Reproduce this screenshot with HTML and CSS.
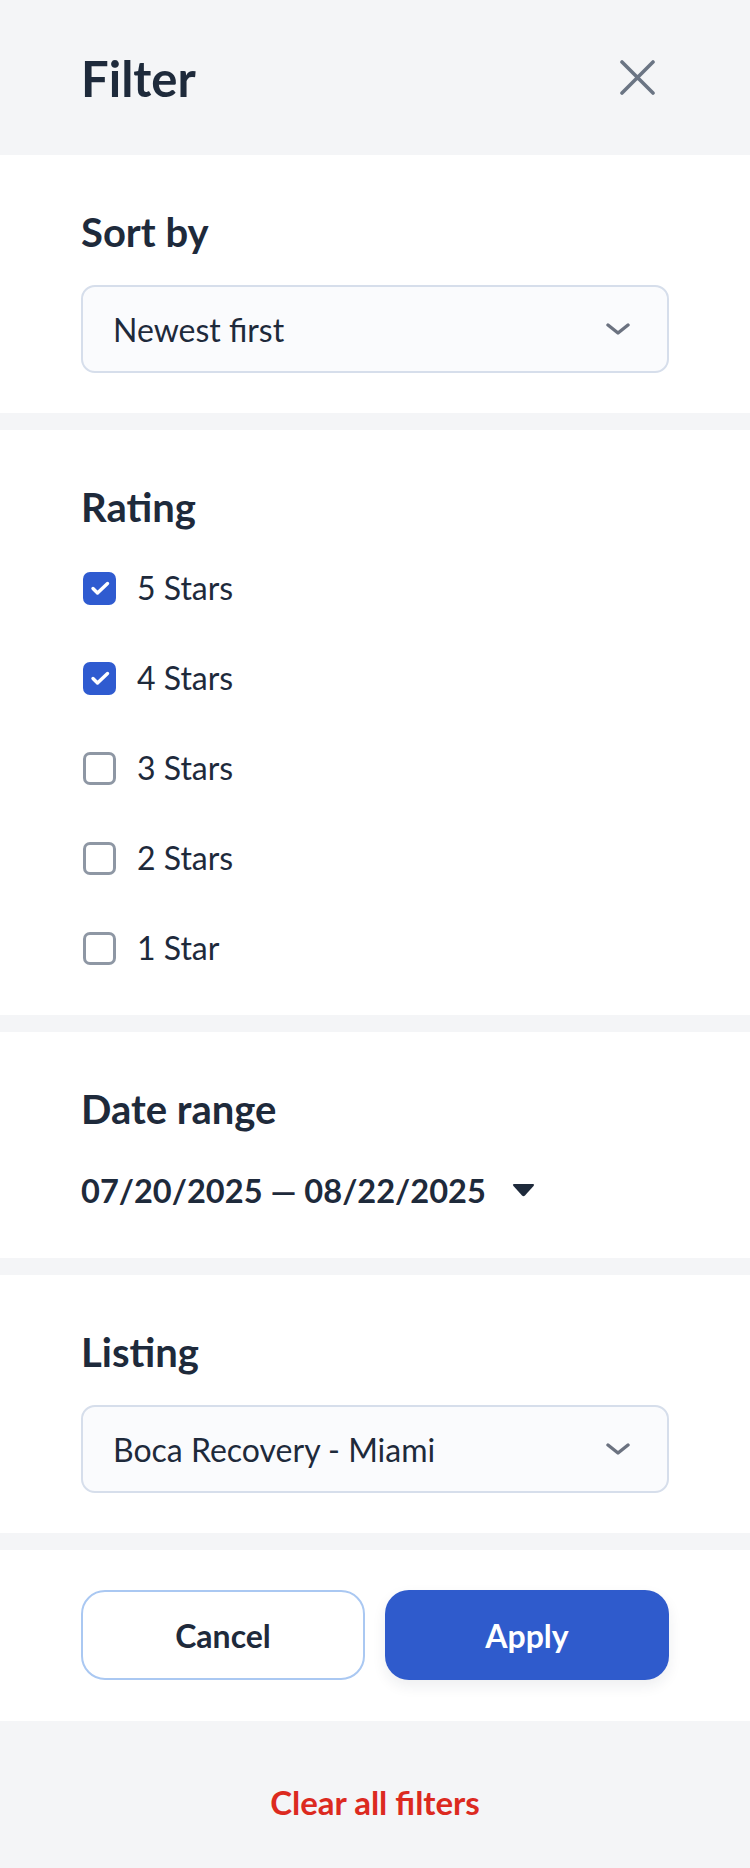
FILE: index.html
```html
<!DOCTYPE html>
<html lang="en">
<head>
<meta charset="utf-8">
<title>Filter</title>
<link rel="stylesheet" href="styles.css">
</head>
<body>
<div class="page">
  <header class="header">
    <h1 class="title">Filter</h1>
    <button class="close" aria-label="Close">
      <svg width="35" height="35" viewBox="0 0 35 35"><path d="M2 2 L33 33 M33 2 L2 33" stroke="#6b7584" stroke-width="3.6" stroke-linecap="round" fill="none"/></svg>
    </button>
  </header>

  <section class="section">
    <h2 class="heading">Sort by</h2>
    <div class="select">
      <span>Newest first</span>
      <svg class="chev" width="24" height="12" viewBox="0 0 24 12"><path d="M2 2 L12 10 L22 2" stroke="#6b7280" stroke-width="3.4" stroke-linecap="round" stroke-linejoin="round" fill="none"/></svg>
    </div>
  </section>

  <section class="section section-rating">
    <h2 class="heading">Rating</h2>
    <ul class="checks">
      <li class="check-row"><span class="box checked"><svg width="32" height="32" viewBox="0 0 32 32"><path d="M9 16.5 L13.5 21 L23.5 11.5" stroke="#fff" stroke-width="3.4" stroke-linecap="round" stroke-linejoin="round" fill="none"/></svg></span><span class="label">5 Stars</span></li>
      <li class="check-row"><span class="box checked"><svg width="32" height="32" viewBox="0 0 32 32"><path d="M9 16.5 L13.5 21 L23.5 11.5" stroke="#fff" stroke-width="3.4" stroke-linecap="round" stroke-linejoin="round" fill="none"/></svg></span><span class="label">4 Stars</span></li>
      <li class="check-row"><span class="box"></span><span class="label">3 Stars</span></li>
      <li class="check-row"><span class="box"></span><span class="label">2 Stars</span></li>
      <li class="check-row"><span class="box"></span><span class="label">1 Star</span></li>
    </ul>
  </section>

  <section class="section section-date">
    <h2 class="heading">Date range</h2>
    <div class="date">
      <span>07/20/2025 — 08/22/2025</span>
      <svg width="23" height="14" viewBox="0 0 22 13"><path d="M2.2 0.8 H19.8 Q22 0.8 20.6 2.6 L12.4 11.8 Q11 13.2 9.6 11.8 L1.4 2.6 Q0 0.8 2.2 0.8 Z" fill="#1e2a3b"/></svg>
    </div>
  </section>

  <section class="section section-listing">
    <h2 class="heading">Listing</h2>
    <div class="select">
      <span>Boca Recovery - Miami</span>
      <svg class="chev" width="24" height="12" viewBox="0 0 24 12"><path d="M2 2 L12 10 L22 2" stroke="#6b7280" stroke-width="3.4" stroke-linecap="round" stroke-linejoin="round" fill="none"/></svg>
    </div>
  </section>

  <section class="section actions">
    <button class="btn btn-cancel">Cancel</button>
    <button class="btn btn-apply">Apply</button>
  </section>

  <footer class="footer">
    <a class="clear" href="#">Clear all filters</a>
  </footer>
</div>
</body>
</html>
```

FILE: styles.css
```css
* { box-sizing: border-box; }

html, body {
  margin: 0;
  padding: 0;
  background: #f4f5f7;
}

body {
  font-family: Lato, "Noto Sans", sans-serif;
  color: #1e2a3b;
}

.page {
  width: 750px;
  min-height: 1868px;
  display: flex;
  flex-direction: column;
}

.header {
  height: 155px;
  padding: 0 81px;
  display: flex;
  align-items: center;
  justify-content: space-between;
  background: #f4f5f7;
}

.title {
  margin: 0;
  font-size: 49px;
  line-height: 58px;
  font-weight: 700;
  color: #1e2a3b;
}

.close {
  border: 0;
  padding: 0;
  margin: 0 14px 0 0;
  background: transparent;
  width: 35px;
  height: 35px;
  display: flex;
}

.section {
  background: #ffffff;
  padding: 53px 81px 40px;
  margin-bottom: 17px;
}

.heading {
  margin: 0 0 29px;
  font-size: 40px;
  line-height: 48px;
  font-weight: 700;
  color: #1e2a3b;
}

.select {
  height: 88px;
  border: 2px solid #d6deeb;
  border-radius: 14px;
  background: #fafbfd;
  display: flex;
  align-items: center;
  justify-content: space-between;
  padding: 0 37px 0 30px;
  font-size: 32px;
  color: #1e2a3b;
}

.chev { display: block; }

.section-rating {
  padding-bottom: 43px;
}

.section-rating .heading {
  margin-bottom: 33px;
}

.checks {
  list-style: none;
  margin: 0;
  padding: 0;
  display: flex;
  flex-direction: column;
  gap: 42px;
}

.check-row {
  height: 48px;
  display: flex;
  align-items: center;
  gap: 21px;
}

.box {
  width: 33px;
  height: 33px;
  margin-left: 2px;
  border: 3px solid #8e97a4;
  border-radius: 7px;
  background: #fff;
  display: flex;
  align-items: center;
  justify-content: center;
}

.box.checked {
  border: 0;
  background: #2f5bd0;
}

.label {
  font-size: 32px;
  line-height: 38px;
  color: #1e2a3b;
}

.section-date {
  padding-bottom: 48px;
}

.section-date .heading {
  margin-bottom: 39px;
}

.date {
  display: flex;
  align-items: center;
  gap: 26px;
  font-size: 32.6px;
  line-height: 38px;
  font-weight: 700;
  color: #1e2a3b;
}

.date svg { display: block; margin-top: -3px; }

.section-listing {
  padding-bottom: 40px;
}

.actions {
  margin-bottom: 0;
  padding: 40px 81px 41px;
  display: grid;
  grid-template-columns: 1fr 1fr;
  gap: 20px;
}

.btn {
  height: 90px;
  border-radius: 24px;
  font-family: Lato, "Noto Sans", sans-serif;
  font-size: 32px;
  font-weight: 700;
  cursor: pointer;
}

.btn-cancel {
  background: #ffffff;
  border: 2px solid #aac8f2;
  color: #1e2a3b;
}

.btn-apply {
  background: #2f5bcc;
  border: 0;
  color: #ffffff;
  box-shadow: 0 6px 14px rgba(30, 41, 59, 0.08);
}

.footer {
  flex: 1;
  background: #f4f5f7;
  padding-top: 62px;
  text-align: center;
}

.clear {
  font-size: 33px;
  line-height: 38px;
  font-weight: 700;
  color: #dc2a1f;
  text-decoration: none;
}
```
